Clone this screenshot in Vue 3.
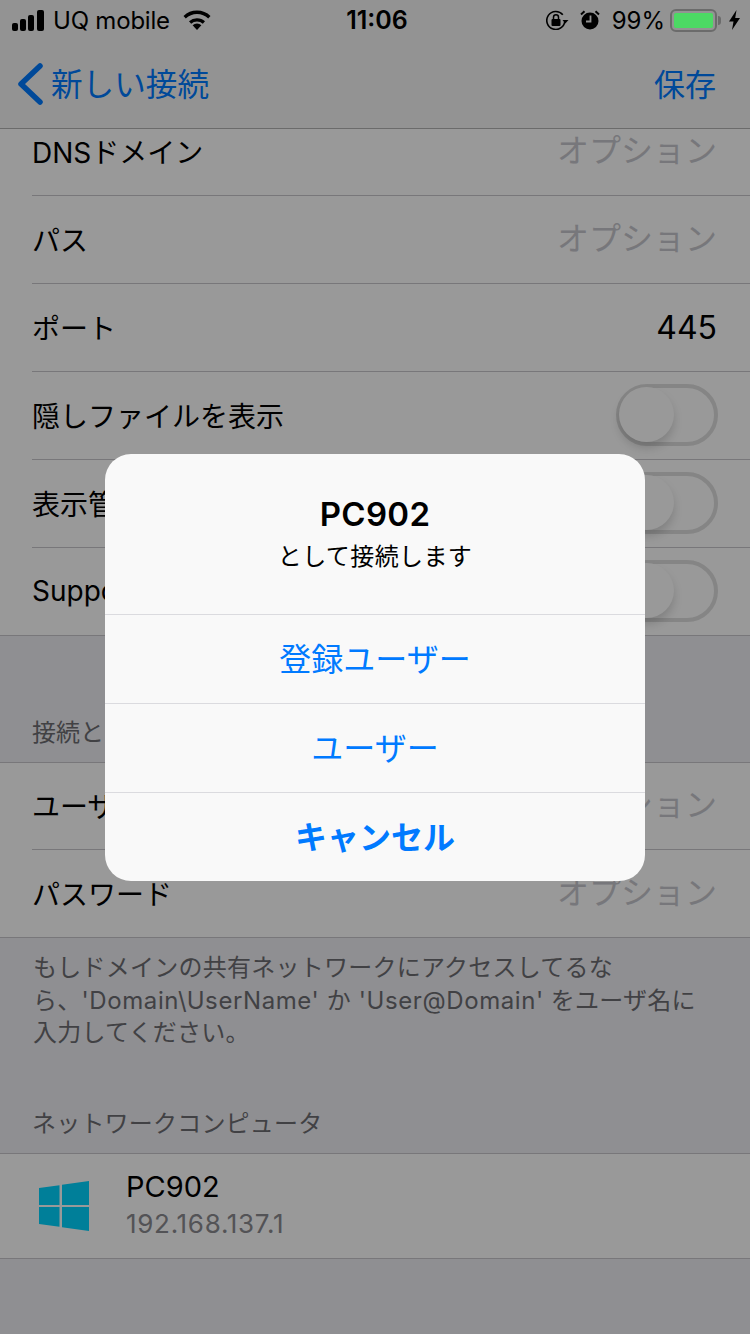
<script setup>
const topRows = [
  { label: 'パス', value: 'オプション', ph: true },
  { label: 'ポート', value: '445' },
  { label: '隠しファイルを表示', toggle: true },
  { label: '表示管理共有', toggle: true },
  { label: 'Support SMB2', toggle: true, last: true }
]
</script>

<template>
  <div class="page">
    <header class="head">
      <div class="status">
        <div class="st-left">
          <svg class="signal" width="33" height="21" viewBox="0 0 33 21"><rect x="0" y="13" width="6" height="8" rx="2"/><rect x="8" y="9" width="6" height="12" rx="2"/><rect x="16" y="5" width="6" height="16" rx="2"/><rect x="25" y="0" width="7" height="21" rx="2"/></svg>
          <span class="carrier">UQ mobile</span>
          <svg class="wifi" width="28" height="20" viewBox="0 0 28 20"><path d="M14 20 9.600 15.200a6.600 6.600 0 0 1 8.800 0Z"/><path d="M14 8.200c3.200 0 6 1.200 8 3.100l-2.200 2.400a8.500 8.500 0 0 0-11.600 0L6 11.300a11.700 11.700 0 0 1 8-3.100Z"/><path d="M14 0.500c5.300 0 10 2 13.500 5.400l-2.300 2.500A16.400 16.400 0 0 0 14 3.900 16.400 16.400 0 0 0 2.800 8.400L0.500 5.900A19.500 19.500 0 0 1 14 0.500Z"/></svg>
        </div>
        <div class="time">11:06</div>
        <div class="st-right">
          <svg class="lock" width="24" height="20" viewBox="0 0 24 20"><path d="M18.800 10.500a9 9 0 1 1-2-5.700" fill="none" stroke="#000" stroke-width="1.600"/><path d="M16.500 10h6L19.300 13.500Z"/><rect x="5.500" y="9" width="9" height="7" rx="1"/><path d="M7.500 9V7.200a2.500 2.500 0 0 1 5 0V9" fill="none" stroke="#000" stroke-width="1.500"/></svg>
          <svg class="alarm" width="20" height="20" viewBox="0 0 20 20"><circle cx="10" cy="11" r="8.500"/><path d="M1 4.500 4.500 1.200M19 4.500 15.500 1.200" stroke="#000" stroke-width="2"/><path d="M10.500 5.500v6H6" fill="none" stroke="#929292" stroke-width="1.800"/></svg>
          <span class="pct">99%</span>
          <div class="battery"><div class="fill"></div></div>
          <div class="nub"></div>
          <svg class="bolt" width="11" height="20" viewBox="0 0 11 20"><path d="M7.500 0 0 11.500h4.500L3 20l8-12H6.200Z"/></svg>
        </div>
      </div>
      <nav class="nav">
        <div class="back">
          <svg width="26" height="42" viewBox="0 0 26 42"><path d="M23 3 4 21l19 18" fill="none" stroke="#007aff" stroke-width="5.500" stroke-linecap="round" stroke-linejoin="round"/></svg>
          <span>新しい接続</span>
        </div>
        <span class="save">保存</span>
      </nav>
    </header>

    <section class="group first">
      <div class="row clipped"><span class="lbl">DNSドメイン</span><span class="val ph">オプション</span></div>
      <div v-for="r in topRows" :key="r.label" class="row" :class="{ last: r.last }">
        <span class="lbl">{{ r.label }}</span>
        <span v-if="r.value" class="val" :class="{ ph: r.ph }">{{ r.value }}</span>
        <div v-if="r.toggle" class="toggle"><div class="knob"></div></div>
      </div>
    </section>

    <div class="sec-title conn">接続とログイン</div>
    <section class="group">
      <div class="row short"><span class="lbl">ユーザ名</span><span class="val ph">オプション</span></div>
      <div class="row last"><span class="lbl">パスワード</span><span class="val ph">オプション</span></div>
    </section>
    <p class="note">もしドメインの共有ネットワークにアクセスしてるな<br>ら、<span class="latin">'Domain\UserName' か 'User@Domain'</span> をユーザ名に<br>入力してください。</p>

    <div class="sec-title net">ネットワークコンピュータ</div>
    <section class="group">
      <div class="pc">
        <svg class="win" width="50" height="50" viewBox="0 0 50 50"><path d="M0 7 20.500 4.200V24H0ZM23 3.800 50 0V24H23ZM0 26H20.500V45.800L0 43ZM23 26H50V50L23 46.200Z"/></svg>
        <div class="pc-text">
          <div class="pc-name">PC902</div>
          <div class="pc-ip">192.168.137.1</div>
        </div>
      </div>
    </section>

    <div class="dim"></div>

    <div class="alert">
      <div class="alert-head">
        <div class="alert-title">PC902</div>
        <div class="alert-msg">として接続します</div>
      </div>
      <div class="alert-btn">登録ユーザー</div>
      <div class="alert-btn">ユーザー</div>
      <div class="alert-btn strong">キャンセル</div>
    </div>
  </div>
</template>

<style>
html, body { margin: 0; padding: 0; }
</style>

<style scoped>
.page {
  position: relative;
  width: 750px;
  height: 1334px;
  overflow: hidden;
  background: #efeff4;
  color: #000;
  font-family: "Inter", "Noto Sans CJK JP", sans-serif;
  font-size: 28px;
}
.head { background: #f6f6f6; border-bottom: 1px solid #b2b2b2; height: 128px; }
.status {
  position: relative;
  z-index: 3;
  height: 40px;
  padding: 0 10px 0 12px;
  display: grid;
  grid-template-columns: 1fr auto 1fr;
  align-items: center;
  font-size: 24px;
  box-sizing: border-box;
}
.st-left, .st-right { display: flex; align-items: center; }
.st-right { justify-content: flex-end; }
.carrier { margin-left: 8px; letter-spacing: -0.2px; }
.wifi { margin-left: 13px; }
.time { font-weight: 600; font-size: 25px; margin-left: 2px; }
.signal, .wifi, .bolt, .alarm, .lock { fill: #000; display: block; }
.alarm { margin-left: 10px; }
.pct { margin-left: 12px; }
.battery {
  width: 47px;
  height: 23px;
  margin-left: 5px;
  box-sizing: border-box;
  border: 2px solid #6b6b6b;
  border-radius: 6px;
  padding: 2px;
}
.fill { height: 100%; background: #4cd964; border-radius: 2px; }
.nub { width: 3px; height: 9px; background: #6b6b6b; border-radius: 0 3px 3px 0; margin-left: 1px; }
.bolt { margin-left: 8px; }
.nav {
  height: 84px;
  padding: 0 34px 0 17px;
  display: flex;
  align-items: center;
  justify-content: space-between;
  color: #007aff;
  font-size: 31.600px;
  box-sizing: border-box;
}
.back { display: flex; align-items: center; gap: 8px; }
.back svg { display: block; position: relative; top: 2px; }
.save { font-size: 31px; }
.group { background: #fff; border-top: 1px solid #c8c7cc; border-bottom: 1px solid #c8c7cc; }
.group.first { border-top: 0; }
.row {
  height: 87px;
  margin-left: 32px;
  padding-right: 33px;
  border-bottom: 1px solid #c8c7cc;
  display: flex;
  align-items: center;
  justify-content: space-between;
  white-space: nowrap;
}
.row.last { border-bottom: 0; }
.row.short { height: 86px; }
.row.clipped { height: 46px; padding-bottom: 20px; }
.lbl { position: relative; top: -1px; }
.val { font-size: 32px; }
.ph { color: #c7c7cd; font-size: 32px; position: relative; top: -4px; }
.toggle {
  width: 102px;
  height: 62px;
  box-sizing: border-box;
  border: 4px solid #dedede;
  border-radius: 31px;
  margin-right: -1px;
  position: relative;
  top: -1px;
}
.knob {
  position: absolute;
  left: -1px;
  top: -1px;
  width: 55px;
  height: 55px;
  border-radius: 50%;
  background: #fff;
  box-shadow: 0 6px 10px rgba(0, 0, 0, 0.16);
}
.sec-title { color: #6d6d72; font-size: 24px; padding-left: 32px; line-height: 34px; }
.conn { padding-top: 80px; padding-bottom: 12px; }
.net { padding-top: 57px; padding-bottom: 12px; letter-spacing: 0.2px; }
.note { margin: 0; padding: 14px 33px 0; color: #6d6d72; font-size: 24px; line-height: 32.500px; white-space: nowrap; letter-spacing: 0.25px; }
.latin { letter-spacing: 0.6px; }
.pc { height: 104px; padding-left: 39px; display: flex; align-items: center; gap: 38px; }
.win { fill: #00d4ff; display: block; }
.pc-name { font-size: 29px; line-height: 36px; margin-left: -1px; }
.pc-ip { font-size: 26px; line-height: 38px; color: #8a8a8f; letter-spacing: 0.700px; margin-left: -1px; }
.dim { position: absolute; inset: 0; z-index: 2; background: rgba(0, 0, 0, 0.4); }
.alert {
  position: absolute;
  z-index: 4;
  left: 105px;
  top: 454px;
  width: 540px;
  background: #f9f9f9;
  border-radius: 26px;
  overflow: hidden;
  text-align: center;
}
.alert-head { height: 160px; padding-top: 38px; box-sizing: border-box; }
.alert-title { font-size: 33px; font-weight: 600; line-height: 44px; letter-spacing: 0.3px; }
.alert-msg { font-size: 24px; line-height: 42px; letter-spacing: 0.4px; }
.alert-btn {
  height: 89px;
  box-sizing: border-box;
  border-top: 1px solid #dbdbdf;
  color: #007aff;
  font-size: 32px;
  display: flex;
  align-items: center;
  justify-content: center;
  padding-bottom: 4px;
}
.strong { font-weight: 700; }
</style>
